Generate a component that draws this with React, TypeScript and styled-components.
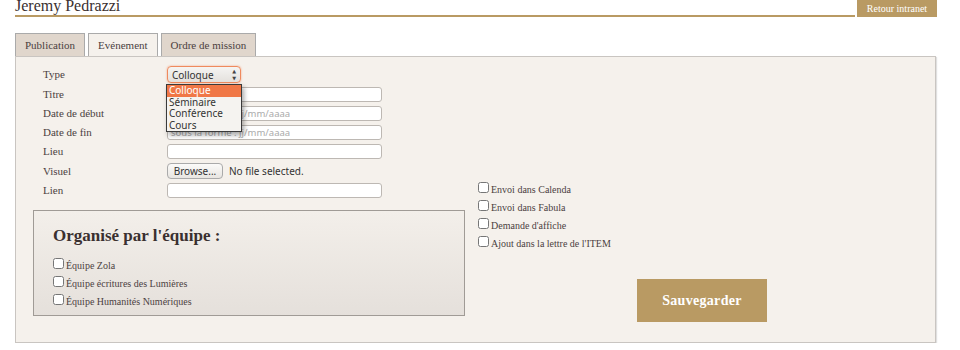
import React from "react";
import styled, { createGlobalStyle } from "styled-components";

const Global = createGlobalStyle`
  body {
    margin: 0;
    background: #ffffff;
    font-family: "Liberation Serif", "DejaVu Serif", serif;
    color: #4b3f3f;
  }
`;

const Page = styled.div`
  width: 922px;
  margin-left: 15px;
`;

const Header = styled.div`
  display: flex;
  align-items: stretch;
  height: 17px;
`;

const Name = styled.div`
  flex: 1;
  border-bottom: 2px solid #b99a63;
  font-size: 16px;
  line-height: 11px;
  color: #3a3030;
  margin-right: 2px;
`;

const BackButton = styled.div`
  background: #b99a63;
  color: #fff;
  font-size: 10px;
  width: 80px;
  display: flex;
  align-items: center;
  justify-content: center;
`;

const Tabs = styled.div`
  display: flex;
  gap: 3px;
  margin-top: 16px;
`;

const Tab = styled.div<{ $active?: boolean }>`
  height: 22px;
  padding: 0 9px;
  display: flex;
  align-items: center;
  font-size: 11px;
  color: #4b3f3f;
  border: 1px solid #aaa;
  border-bottom: none;
  background: ${(p) => (p.$active ? "#f5f1ec" : "#e0d6cc")};
`;

const Panel = styled.div`
  width: 921px;
  background: #f5f1ec;
  border: 1px solid #c9c5c1;
  box-shadow: 1px 1px 1px rgba(0, 0, 0, 0.12);
  padding: 9px 0 20px 17px;
  box-sizing: border-box;
  display: flex;
`;

const LeftCol = styled.div`
  width: 432px;
`;

const Form = styled.div`
  position: relative;
  display: grid;
  grid-template-columns: 124px 215px;
  row-gap: 4px;
  padding-left: 10px;
  align-items: center;
`;

const Label = styled.div`
  font-size: 11px;
  line-height: 15px;
`;

const Input = styled.div`
  height: 13px;
  background: #fff;
  border: 1px solid #bdb8b3;
  border-radius: 3px;
  font-family: "Noto Sans", "DejaVu Sans", sans-serif;
  font-size: 9.5px;
  line-height: 13px;
  color: #aaa;
  padding-left: 3px;
`;

const Select = styled.div`
  width: 64px;
  height: 15px;
  border: 1px solid #ef8a5e;
  box-shadow: 0 0 2px #f3a27f;
  border-radius: 4px;
  background: linear-gradient(#f5f4f2, #e4e1dd);
  font-family: "Noto Sans", "DejaVu Sans", sans-serif;
  font-size: 10px;
  color: #333;
  display: flex;
  align-items: center;
  justify-content: space-between;
  padding: 0 4px;
  box-sizing: content-box;
`;

const Arrows = styled.span`
  font-size: 5px;
  line-height: 7px;
  display: flex;
  flex-direction: column;
  color: #444;
`;

const Dropdown = styled.div`
  position: absolute;
  left: 133px;
  top: 18px;
  width: 74px;
  background: #f5f3f0;
  border: 1px solid #3a3a3a;
  box-shadow: 2px 3px 5px rgba(0, 0, 0, 0.35);
  font-family: "Noto Sans", "DejaVu Sans", sans-serif;
  font-size: 10px;
  z-index: 2;
`;

const Option = styled.div<{ $selected?: boolean }>`
  height: 11.5px;
  line-height: 11.5px;
  padding-left: 2px;
  color: ${(p) => (p.$selected ? "#fff" : "#333")};
  background: ${(p) => (p.$selected ? "#f07746" : "transparent")};
`;

const FileRow = styled.div`
  display: flex;
  align-items: center;
  gap: 6px;
  font-family: "Noto Sans", "DejaVu Sans", sans-serif;
  font-size: 10px;
  color: #333;
`;

const Browse = styled.div`
  width: 54px;
  height: 14px;
  border: 1px solid #aaa;
  border-radius: 4px;
  background: linear-gradient(#fbfaf9, #e8e5e1);
  display: flex;
  align-items: center;
  justify-content: center;
`;

const TeamBox = styled.div`
  margin-top: 12px;
  height: 106px;
  box-sizing: border-box;
  border: 1px solid #a09b96;
  background: linear-gradient(#f3efea, #e5e0db);
  padding: 15px 19px 0;
`;

const TeamTitle = styled.div`
  font-size: 17px;
  font-weight: bold;
  color: #3a3030;
  margin-bottom: 7px;
`;

const CheckRow = styled.label`
  display: flex;
  align-items: flex-end;
  gap: 2px;
  font-size: 10px;
  height: 18px;
  color: #4b3f3f;
`;

const Box = styled.input`
  width: 11px;
  height: 11px;
  margin: 0 0 2px 0;
`;

const RightCol = styled.div`
  margin-left: 13px;
  padding-top: 111px;
`;

const SaveButton = styled.div`
  margin: 30px 0 0 159px;
  width: 130px;
  height: 43px;
  background: #b99a63;
  color: #fff;
  font-size: 14px;
  font-weight: bold;
  letter-spacing: 0.3px;
  display: flex;
  align-items: center;
  justify-content: center;
`;

const types = ["Colloque", "Séminaire", "Conférence", "Cours"];
const teams = ["Équipe Zola", "Équipe écritures des Lumières", "Équipe Humanités Numériques"];
const options = ["Envoi dans Calenda", "Envoi dans Fabula", "Demande d'affiche", "Ajout dans la lettre de l'ITEM"];

const App = () => {
  return (
    <Page>
      <Global />
      <Header>
        <Name>Jeremy Pedrazzi</Name>
        <BackButton>Retour intranet</BackButton>
      </Header>
      <Tabs>
        <Tab>Publication</Tab>
        <Tab $active>Evénement</Tab>
        <Tab>Ordre de mission</Tab>
      </Tabs>
      <Panel>
        <LeftCol>
          <Form>
            <Label>Type</Label>
            <div>
              <Select>
                Colloque
                <Arrows>
                  <span>▲</span>
                  <span>▼</span>
                </Arrows>
              </Select>
            </div>
            <Label>Titre</Label>
            <Input />
            <Label>Date de début</Label>
            <Input>sous la forme : jj/mm/aaaa</Input>
            <Label>Date de fin</Label>
            <Input>sous la forme : jj/mm/aaaa</Input>
            <Label>Lieu</Label>
            <Input />
            <Label>Visuel</Label>
            <FileRow>
              <Browse>Browse...</Browse>
              No file selected.
            </FileRow>
            <Label>Lien</Label>
            <Input />
            <Dropdown>
              {types.map((t, i) => (
                <Option key={t} $selected={i === 0}>
                  {t}
                </Option>
              ))}
            </Dropdown>
          </Form>
          <TeamBox>
            <TeamTitle>Organisé par l'équipe :</TeamTitle>
            {teams.map((t) => (
              <CheckRow key={t}>
                <Box type="checkbox" />
                {t}
              </CheckRow>
            ))}
          </TeamBox>
        </LeftCol>
        <RightCol>
          {options.map((o) => (
            <CheckRow key={o}>
              <Box type="checkbox" />
              {o}
            </CheckRow>
          ))}
          <SaveButton>Sauvegarder</SaveButton>
        </RightCol>
      </Panel>
    </Page>
  );
};

export default App;
